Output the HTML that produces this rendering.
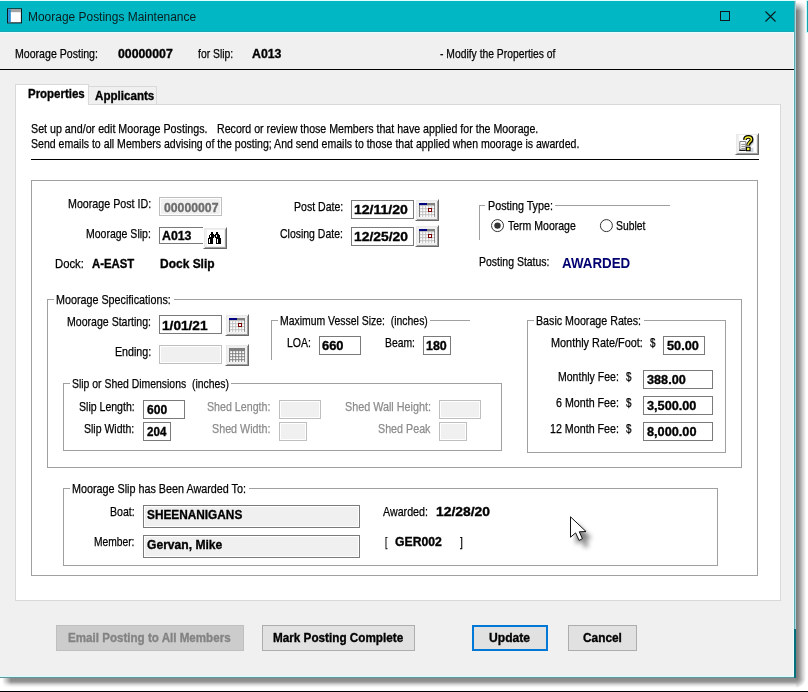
<!DOCTYPE html>
<html><head><meta charset="utf-8"><title>Moorage Postings Maintenance</title>
<style>
html,body{margin:0;padding:0;}
body{width:808px;height:692px;overflow:hidden;background:#fff;position:relative;font-family:"Liberation Sans",sans-serif;}
div,span.t,svg{position:absolute;box-sizing:border-box;}
span.t{white-space:pre;transform-origin:0 0;}
span.b{font-weight:bold;}
span.ns{-webkit-text-stroke:0 !important;}

.win{left:0;top:0;width:796px;height:678px;background:#f0f0f0;}
.gb{border:1px solid #a0a0a0;}
.lbl{background:#fff;height:3px;}
.edit{background:#fff;border:1px solid #7a7a7a;}
.edit.dis{background:#f0f0f0;border:1px solid #bfbfbf;box-shadow:inset 0 0 0 1px #fff;}
.ro{background:#f0f0f0;border:1px solid #7a7a7a;box-shadow:inset 0 0 0 1px #fff;}
span.t{-webkit-text-stroke:0.25px currentColor;}
span.b{-webkit-text-stroke:0.35px currentColor;}
.b3{background:#f0f0f0;border:1px solid;border-color:#fff #696969 #696969 #fff;box-shadow:inset 1px 1px 0 #e9e9e9, inset -1px -1px 0 #a0a0a0;}
.btn{background:#e1e1e1;border:1px solid #adadad;}

</style></head>
<body>
<div style="left:796px;top:2px;width:10px;height:676px;background:linear-gradient(to right,#7c7c7c 0,#808080 10%,#888 20%,#939393 30%,#a3a3a3 40%,#b4b4b4 50%,#c6c6c6 60%,#d6d6d6 70%,#e2e2e2 80%,#efefef 90%,#fff 100%);-webkit-mask-image:linear-gradient(to bottom,transparent 0,#000 9px);mask-image:linear-gradient(to bottom,transparent 0,#000 9px);"></div>
<div style="left:2px;top:678px;width:794px;height:10px;background:linear-gradient(to bottom,#8a8a8a 0,#8c8c8c 20%,#969696 35%,#a8a8a8 45%,#c0c0c0 55%,#d8d8d8 65%,#ececec 78%,#fafafa 90%,#fff 100%);-webkit-mask-image:linear-gradient(to right,transparent 0,#000 9px);mask-image:linear-gradient(to right,transparent 0,#000 9px);"></div>
<div style="left:796px;top:678px;width:10px;height:10px;background:radial-gradient(circle 10px at 0 0,#808080 0,#888 15%,#969696 30%,#b0b0b0 50%,#d2d2d2 70%,#efefef 90%,#fff 100%);"></div>
<div style="left:806px;top:0px;width:2px;height:33px;background:#c4ffff;"></div>
<div style="left:807px;top:1px;width:1px;height:31px;background:#1aa0ac;"></div>
<div style="left:0px;top:691px;width:808px;height:1px;background:#000;"></div>
<div class="win"></div>
<div style="left:0px;top:0px;width:796px;height:1px;background:#e0ffff;"></div>
<div style="left:0px;top:1px;width:795px;height:30px;background:#00b7c3;"></div>
<div style="left:0px;top:31px;width:795px;height:1px;background:#14a9b5;"></div>
<div style="left:0px;top:32px;width:794px;height:1px;background:#e6ffff;"></div>
<div style="left:793px;top:33px;width:1px;height:643px;background:#eafcfd;"></div>
<div style="left:794px;top:1px;width:1px;height:676px;background:#5fa8b1;"></div>
<div style="left:795px;top:1px;width:1px;height:676px;background:#9fd9de;"></div>
<div style="left:0px;top:676px;width:796px;height:1px;background:#d4ffff;"></div>
<div style="left:0px;top:677px;width:796px;height:1px;background:#5e979c;"></div>
<div style="left:794px;top:629px;width:2px;height:49px;background:#05707c;"></div>
<svg style="left:7px;top:8px" width="17" height="17" viewBox="0 0 17 17"><rect x="0" y="0.3" width="15" height="15.1" fill="#0d1b1e"/><rect x="1.1" y="1.4" width="12.8" height="12.9" fill="#fff"/><rect x="1.1" y="1.4" width="12.8" height="2.8" fill="#a3a3a3"/><rect x="1.1" y="1.4" width="2.7" height="12.9" fill="#1e90d8"/></svg>
<svg style="left:715px;top:8px" width="70" height="18" viewBox="0 0 70 18"><rect x="5.5" y="3.5" width="9" height="9" fill="none" stroke="#0a1a1c" stroke-width="1"/><path d="M50.5 3.5 L60.5 13.5 M60.5 3.5 L50.5 13.5" stroke="#0a1a1c" stroke-width="1.1" fill="none"/></svg>
<div style="left:0px;top:69px;width:794px;height:1px;background:#000;"></div>
<div style="left:15px;top:104px;width:766px;height:497px;background:#fff;border:1px solid #d9d9d9;"></div>
<div style="left:88px;top:86px;width:69px;height:19px;background:#f0f0f0;border:1px solid #d9d9d9;border-bottom-color:#d9d9d9;"></div>
<div style="left:15px;top:84px;width:74px;height:21px;background:#fff;border:1px solid #d9d9d9;border-bottom:0;"></div>
<div style="left:31px;top:159px;width:728px;height:1px;background:#000;"></div>
<div class="b3" style="left:735px;top:133px;width:24px;height:22px;"></div>
<div style="left:739px;top:135px;width:17px;height:17px;background:#fff;"></div>
<svg style="left:738px;top:135px" width="19" height="18" viewBox="0 0 19 18">
<path d="M14.6 5 q1.4 1.8 -0.6 4 l-1.6 1.8 M12.4 13.6 h2.2 v2.6 h-2.2z" fill="none" stroke="#b9c2cc" stroke-width="1.8" opacity=".7"/>
<path d="M1.8 6.5 h6 v8.8 h-6z" fill="#fff" stroke="#808080"/>
<path d="M1.2 15.3 h6.4" stroke="#000" stroke-width="1.1"/>
<path d="M3.3 9.4h4M3.3 11.4h4M3.3 13.4h4" stroke="#808080" stroke-width="0.9"/>
<path d="M6.9 4.9 q0.1 -3 3.5 -3 q3.2 0 3.2 2.5 q0 1.3 -1.5 2.6 q-1.9 1.7 -2 3.6" fill="none" stroke="#000" stroke-width="3.8"/>
<path d="M7 4.7 q0.2 -2.7 3.4 -2.7 q3 0 3 2.4 q0 1.2 -1.4 2.4 q-2 1.8 -2.1 3.3" fill="none" stroke="#f6ee2e" stroke-width="1.4"/>
<rect x="8.5" y="12.2" width="3.5" height="3.5" fill="#fbf43a" stroke="#000" stroke-width="1.1"/>
</svg>
<div style="left:31px;top:180px;width:727px;height:396px;border:1px solid #a0a0a0;"></div>
<div class="edit dis" style="left:159px;top:197px;width:63px;height:19px;"></div>
<div class="edit" style="left:159px;top:227px;width:45px;height:17px;"></div>
<div class="b3" style="left:203px;top:227px;width:24px;height:22px;"></div>
<div style="left:207px;top:230px;width:17px;height:16px;background:#fff;"></div>
<svg style="left:208px;top:232px" width="13" height="12" viewBox="0 0 13 12" shape-rendering="crispEdges"><rect x="0" y="0" width="13" height="12" fill="none"/><rect x="3" y="0" width="2" height="1" fill="#000"/><rect x="8" y="0" width="2" height="1" fill="#000"/><rect x="3" y="1" width="2" height="1" fill="#000"/><rect x="8" y="1" width="2" height="1" fill="#000"/><rect x="2" y="2" width="4" height="1" fill="#000"/><rect x="7" y="2" width="4" height="1" fill="#000"/><rect x="1" y="3" width="1" height="1" fill="#000"/><rect x="3" y="3" width="5" height="1" fill="#000"/><rect x="9" y="3" width="3" height="1" fill="#000"/><rect x="1" y="4" width="1" height="1" fill="#000"/><rect x="3" y="4" width="3" height="1" fill="#000"/><rect x="6" y="4" width="1" height="1" fill="#808080"/><rect x="7" y="4" width="1" height="1" fill="#000"/><rect x="9" y="4" width="3" height="1" fill="#000"/><rect x="1" y="5" width="5" height="1" fill="#000"/><rect x="7" y="5" width="5" height="1" fill="#000"/><rect x="0" y="6" width="5" height="1" fill="#000"/><rect x="8" y="6" width="5" height="1" fill="#000"/><rect x="0" y="7" width="1" height="1" fill="#000"/><rect x="2" y="7" width="3" height="1" fill="#000"/><rect x="8" y="7" width="1" height="1" fill="#000"/><rect x="10" y="7" width="3" height="1" fill="#000"/><rect x="0" y="8" width="1" height="1" fill="#000"/><rect x="2" y="8" width="3" height="1" fill="#000"/><rect x="8" y="8" width="1" height="1" fill="#000"/><rect x="10" y="8" width="3" height="1" fill="#000"/><rect x="0" y="9" width="1" height="1" fill="#000"/><rect x="2" y="9" width="3" height="1" fill="#000"/><rect x="8" y="9" width="1" height="1" fill="#000"/><rect x="10" y="9" width="3" height="1" fill="#000"/><rect x="0" y="10" width="1" height="1" fill="#000"/><rect x="2" y="10" width="3" height="1" fill="#000"/><rect x="8" y="10" width="1" height="1" fill="#000"/><rect x="10" y="10" width="3" height="1" fill="#000"/><rect x="0" y="11" width="5" height="1" fill="#000"/><rect x="8" y="11" width="5" height="1" fill="#000"/></svg>
<div class="edit" style="left:351px;top:200px;width:63px;height:19px;"></div>
<div class="b3" style="left:415px;top:199px;width:24px;height:22px;"></div>
<svg style="left:419px;top:203px" width="16" height="14" viewBox="0 0 16 14"><rect x="0" y="0" width="16" height="14" fill="#c0c0c0"/><rect x="0" y="2" width="1" height="12" fill="#808080"/><rect x="15" y="2" width="1" height="12" fill="#808080"/><rect x="1.2" y="3.2" width="2" height="2" fill="#fff"/><rect x="1.2" y="6.2" width="2" height="2" fill="#fff"/><rect x="1.2" y="9.2" width="2" height="2" fill="#fff"/><rect x="1.2" y="12.2" width="2" height="2" fill="#fff"/><rect x="4.2" y="3.2" width="2" height="2" fill="#fff"/><rect x="4.2" y="6.2" width="2" height="2" fill="#fff"/><rect x="4.2" y="9.2" width="2" height="2" fill="#fff"/><rect x="4.2" y="12.2" width="2" height="2" fill="#fff"/><rect x="7.2" y="3.2" width="2" height="2" fill="#fff"/><rect x="7.2" y="6.2" width="2" height="2" fill="#fff"/><rect x="7.2" y="9.2" width="2" height="2" fill="#fff"/><rect x="7.2" y="12.2" width="2" height="2" fill="#fff"/><rect x="10.2" y="3.2" width="2" height="2" fill="#fff"/><rect x="10.2" y="6.2" width="2" height="2" fill="#fff"/><rect x="10.2" y="9.2" width="2" height="2" fill="#fff"/><rect x="10.2" y="12.2" width="2" height="2" fill="#fff"/><rect x="13.2" y="3.2" width="2" height="2" fill="#fff"/><rect x="13.2" y="6.2" width="2" height="2" fill="#fff"/><rect x="13.2" y="9.2" width="2" height="2" fill="#fff"/><rect x="13.2" y="12.2" width="2" height="2" fill="#fff"/><rect x="0" y="0" width="16" height="2" fill="#808080"/><rect x="0" y="0" width="8" height="2" fill="#000080"/><rect x="9.5" y="5.5" width="3" height="3" fill="#fff" stroke="#7a0000" stroke-width="1"/></svg>
<div class="edit" style="left:351px;top:227px;width:63px;height:19px;"></div>
<div class="b3" style="left:415px;top:225px;width:24px;height:22px;"></div>
<svg style="left:419px;top:229px" width="16" height="14" viewBox="0 0 16 14"><rect x="0" y="0" width="16" height="14" fill="#c0c0c0"/><rect x="0" y="2" width="1" height="12" fill="#808080"/><rect x="15" y="2" width="1" height="12" fill="#808080"/><rect x="1.2" y="3.2" width="2" height="2" fill="#fff"/><rect x="1.2" y="6.2" width="2" height="2" fill="#fff"/><rect x="1.2" y="9.2" width="2" height="2" fill="#fff"/><rect x="1.2" y="12.2" width="2" height="2" fill="#fff"/><rect x="4.2" y="3.2" width="2" height="2" fill="#fff"/><rect x="4.2" y="6.2" width="2" height="2" fill="#fff"/><rect x="4.2" y="9.2" width="2" height="2" fill="#fff"/><rect x="4.2" y="12.2" width="2" height="2" fill="#fff"/><rect x="7.2" y="3.2" width="2" height="2" fill="#fff"/><rect x="7.2" y="6.2" width="2" height="2" fill="#fff"/><rect x="7.2" y="9.2" width="2" height="2" fill="#fff"/><rect x="7.2" y="12.2" width="2" height="2" fill="#fff"/><rect x="10.2" y="3.2" width="2" height="2" fill="#fff"/><rect x="10.2" y="6.2" width="2" height="2" fill="#fff"/><rect x="10.2" y="9.2" width="2" height="2" fill="#fff"/><rect x="10.2" y="12.2" width="2" height="2" fill="#fff"/><rect x="13.2" y="3.2" width="2" height="2" fill="#fff"/><rect x="13.2" y="6.2" width="2" height="2" fill="#fff"/><rect x="13.2" y="9.2" width="2" height="2" fill="#fff"/><rect x="13.2" y="12.2" width="2" height="2" fill="#fff"/><rect x="0" y="0" width="16" height="2" fill="#808080"/><rect x="0" y="0" width="8" height="2" fill="#000080"/><rect x="9.5" y="5.5" width="3" height="3" fill="#fff" stroke="#7a0000" stroke-width="1"/></svg>
<div style="left:479px;top:205px;width:191px;height:35px;border-top:1px solid #a0a0a0;border-left:1px solid #a0a0a0;"></div>
<div style="left:485px;top:205px;width:70px;height:1px;background:#fff;"></div>
<svg style="left:490px;top:218px" width="15" height="15" viewBox="0 0 15 15"><circle cx="7.5" cy="7.6" r="6" fill="#fff" stroke="#333" stroke-width="1"/><circle cx="7.5" cy="7.6" r="3.2" fill="#333"/></svg>
<svg style="left:599px;top:218px" width="15" height="15" viewBox="0 0 15 15"><circle cx="7.4" cy="7.6" r="6" fill="#fff" stroke="#333" stroke-width="1"/></svg>
<div style="left:47px;top:299px;width:695px;height:169px;border-top:1px solid #a0a0a0;border-left:1px solid #a0a0a0;border-bottom:1px solid #a0a0a0;border-right:1px solid #a0a0a0;"></div>
<div style="left:54px;top:299px;width:120px;height:1px;background:#fff;"></div>
<div class="edit" style="left:159px;top:315px;width:63px;height:19px;"></div>
<div class="b3" style="left:225px;top:314px;width:24px;height:22px;"></div>
<svg style="left:229px;top:318px" width="16" height="14" viewBox="0 0 16 14"><rect x="0" y="0" width="16" height="14" fill="#c0c0c0"/><rect x="0" y="2" width="1" height="12" fill="#808080"/><rect x="15" y="2" width="1" height="12" fill="#808080"/><rect x="1.2" y="3.2" width="2" height="2" fill="#fff"/><rect x="1.2" y="6.2" width="2" height="2" fill="#fff"/><rect x="1.2" y="9.2" width="2" height="2" fill="#fff"/><rect x="1.2" y="12.2" width="2" height="2" fill="#fff"/><rect x="4.2" y="3.2" width="2" height="2" fill="#fff"/><rect x="4.2" y="6.2" width="2" height="2" fill="#fff"/><rect x="4.2" y="9.2" width="2" height="2" fill="#fff"/><rect x="4.2" y="12.2" width="2" height="2" fill="#fff"/><rect x="7.2" y="3.2" width="2" height="2" fill="#fff"/><rect x="7.2" y="6.2" width="2" height="2" fill="#fff"/><rect x="7.2" y="9.2" width="2" height="2" fill="#fff"/><rect x="7.2" y="12.2" width="2" height="2" fill="#fff"/><rect x="10.2" y="3.2" width="2" height="2" fill="#fff"/><rect x="10.2" y="6.2" width="2" height="2" fill="#fff"/><rect x="10.2" y="9.2" width="2" height="2" fill="#fff"/><rect x="10.2" y="12.2" width="2" height="2" fill="#fff"/><rect x="13.2" y="3.2" width="2" height="2" fill="#fff"/><rect x="13.2" y="6.2" width="2" height="2" fill="#fff"/><rect x="13.2" y="9.2" width="2" height="2" fill="#fff"/><rect x="13.2" y="12.2" width="2" height="2" fill="#fff"/><rect x="0" y="0" width="16" height="2" fill="#808080"/><rect x="0" y="0" width="8" height="2" fill="#000080"/><rect x="9.5" y="5.5" width="3" height="3" fill="#fff" stroke="#7a0000" stroke-width="1"/></svg>
<div class="edit dis" style="left:159px;top:345px;width:63px;height:19px;"></div>
<div class="b3" style="left:225px;top:344px;width:24px;height:22px;"></div>
<svg style="left:229px;top:348px" width="16" height="14" viewBox="0 0 16 14"><rect x="0" y="0" width="16" height="14" fill="#808080"/><rect x="0" y="2" width="1" height="12" fill="#808080"/><rect x="15" y="2" width="1" height="12" fill="#808080"/><rect x="1.2" y="3.2" width="2" height="2" fill="#fff"/><rect x="1.2" y="6.2" width="2" height="2" fill="#fff"/><rect x="1.2" y="9.2" width="2" height="2" fill="#fff"/><rect x="1.2" y="12.2" width="2" height="2" fill="#fff"/><rect x="4.2" y="3.2" width="2" height="2" fill="#fff"/><rect x="4.2" y="6.2" width="2" height="2" fill="#fff"/><rect x="4.2" y="9.2" width="2" height="2" fill="#fff"/><rect x="4.2" y="12.2" width="2" height="2" fill="#fff"/><rect x="7.2" y="3.2" width="2" height="2" fill="#fff"/><rect x="7.2" y="6.2" width="2" height="2" fill="#fff"/><rect x="7.2" y="9.2" width="2" height="2" fill="#fff"/><rect x="7.2" y="12.2" width="2" height="2" fill="#fff"/><rect x="10.2" y="3.2" width="2" height="2" fill="#fff"/><rect x="10.2" y="6.2" width="2" height="2" fill="#fff"/><rect x="10.2" y="9.2" width="2" height="2" fill="#fff"/><rect x="10.2" y="12.2" width="2" height="2" fill="#fff"/><rect x="13.2" y="3.2" width="2" height="2" fill="#fff"/><rect x="13.2" y="6.2" width="2" height="2" fill="#fff"/><rect x="13.2" y="9.2" width="2" height="2" fill="#fff"/><rect x="13.2" y="12.2" width="2" height="2" fill="#fff"/><rect x="0" y="0" width="16" height="2" fill="#808080"/><rect x="0" y="0" width="8" height="2" fill="#808080"/></svg>
<div style="left:271px;top:320px;width:199px;height:40px;border-top:1px solid #a0a0a0;border-left:1px solid #a0a0a0;"></div>
<div style="left:278px;top:320px;width:152px;height:1px;background:#fff;"></div>
<div class="edit" style="left:319px;top:336px;width:42px;height:19px;"></div>
<div class="edit" style="left:423px;top:336px;width:28px;height:19px;"></div>
<div style="left:63px;top:383px;width:439px;height:68px;border-top:1px solid #a0a0a0;border-left:1px solid #a0a0a0;border-bottom:1px solid #a0a0a0;border-right:1px solid #a0a0a0;"></div>
<div style="left:70px;top:383px;width:161px;height:1px;background:#fff;"></div>
<div class="edit" style="left:143px;top:400px;width:42px;height:19px;"></div>
<div class="edit" style="left:143px;top:422px;width:28px;height:19px;"></div>
<div class="edit dis" style="left:279px;top:400px;width:42px;height:19px;"></div>
<div class="edit dis" style="left:279px;top:422px;width:28px;height:19px;"></div>
<div class="edit dis" style="left:439px;top:400px;width:42px;height:19px;"></div>
<div class="edit dis" style="left:439px;top:422px;width:28px;height:19px;"></div>
<div style="left:527px;top:320px;width:199px;height:133px;border-top:1px solid #a0a0a0;border-left:1px solid #a0a0a0;border-bottom:1px solid #a0a0a0;border-right:1px solid #a0a0a0;"></div>
<div style="left:534px;top:320px;width:110px;height:1px;background:#fff;"></div>
<div class="edit" style="left:663px;top:336px;width:42px;height:19px;"></div>
<div class="edit" style="left:643px;top:370px;width:70px;height:19px;"></div>
<div class="edit" style="left:643px;top:396px;width:70px;height:19px;"></div>
<div class="edit" style="left:643px;top:422px;width:70px;height:19px;"></div>
<div style="left:63px;top:488px;width:655px;height:78px;border-top:1px solid #a0a0a0;border-left:1px solid #a0a0a0;border-bottom:1px solid #a0a0a0;border-right:1px solid #a0a0a0;"></div>
<div style="left:70px;top:488px;width:179px;height:1px;background:#fff;"></div>
<div class="ro" style="left:143px;top:505px;width:217px;height:23px;"></div>
<div class="ro" style="left:143px;top:535px;width:217px;height:23px;"></div>
<div style="left:56px;top:625px;width:188px;height:26px;background:#cccccc;border:1px solid #bfbfbf;"></div>
<div class="btn" style="left:262px;top:625px;width:153px;height:26px;"></div>
<div class="btn" style="left:472px;top:625px;width:76px;height:26px;border:2px solid #0078d7;"></div>
<div class="btn" style="left:568px;top:625px;width:69px;height:26px;"></div>
<span class="t ns" style="left:27.52px;top:9.64px;font-size:12px;line-height:15px;color:#0a1c1e;transform:scaleX(0.9963);">Moorage Postings Maintenance</span>
<span class="t" style="left:15.01px;top:45.8px;font-size:13px;line-height:16px;color:#000;transform:scaleX(0.8140);">Moorage Posting:</span>
<span class="t b" style="left:118.26px;top:45.8px;font-size:13px;line-height:16px;color:#000;transform:scaleX(0.9464);">00000007</span>
<span class="t" style="left:198.21px;top:45.8px;font-size:13px;line-height:16px;color:#000;transform:scaleX(0.7977);">for Slip:</span>
<span class="t b" style="left:252.01px;top:45.8px;font-size:13px;line-height:16px;color:#000;transform:scaleX(0.9468);">A013</span>
<span class="t" style="left:440.05px;top:45.8px;font-size:13px;line-height:16px;color:#000;transform:scaleX(0.7951);">- Modify the Properties of</span>
<span class="t b" style="left:27.57px;top:85.8px;font-size:13px;line-height:16px;color:#000;transform:scaleX(0.8816);">Properties</span>
<span class="t b" style="left:95.10px;top:87.8px;font-size:13px;line-height:16px;color:#000;transform:scaleX(0.8924);">Applicants</span>
<span class="t" style="left:30.99px;top:120.8px;font-size:13px;line-height:16px;color:#000;transform:scaleX(0.8221);">Set up and/or edit Moorage Postings.</span>
<span class="t" style="left:217.01px;top:120.8px;font-size:13px;line-height:16px;color:#000;transform:scaleX(0.8174);">Record or review those Members that have applied for the Moorage.</span>
<span class="t" style="left:30.99px;top:135.8px;font-size:13px;line-height:16px;color:#000;transform:scaleX(0.8107);">Send emails to all Members advising of the posting; And send emails to those that applied when moorage is awarded.</span>
<span class="t" style="left:67.76px;top:195.8px;font-size:13px;line-height:16px;color:#000;transform:scaleX(0.8227);">Moorage Post ID:</span>
<span class="t b" style="left:163.90px;top:199.8px;font-size:13px;line-height:16px;color:#6d6d6d;transform:scaleX(0.9418);">00000007</span>
<span class="t" style="left:86.19px;top:225.8px;font-size:13px;line-height:16px;color:#000;transform:scaleX(0.8079);">Moorage Slip:</span>
<span class="t b" style="left:162.01px;top:227.8px;font-size:13px;line-height:16px;color:#000;transform:scaleX(0.9468);">A013</span>
<span class="t" style="left:54.63px;top:255.8px;font-size:13px;line-height:16px;color:#000;transform:scaleX(0.8698);">Dock:</span>
<span class="t b" style="left:92.13px;top:255.8px;font-size:13px;line-height:16px;color:#000;transform:scaleX(0.8741);">A-EAST</span>
<span class="t b" style="left:159.65px;top:255.8px;font-size:13px;line-height:16px;color:#000;transform:scaleX(0.9217);">Dock Slip</span>
<span class="t" style="left:293.78px;top:198.8px;font-size:13px;line-height:16px;color:#000;transform:scaleX(0.8120);">Post Date:</span>
<span class="t b" style="left:354.22px;top:201.8px;font-size:13px;line-height:16px;color:#000;transform:scaleX(1.0787);">12/11/20</span>
<span class="t" style="left:280.20px;top:225.8px;font-size:13px;line-height:16px;color:#000;transform:scaleX(0.8059);">Closing Date:</span>
<span class="t b" style="left:354.02px;top:228.8px;font-size:13px;line-height:16px;color:#000;transform:scaleX(1.0650);">12/25/20</span>
<span class="t" style="left:488.29px;top:197.8px;font-size:13px;line-height:16px;color:#000;transform:scaleX(0.8269);">Posting Type:</span>
<span class="t" style="left:508.27px;top:217.8px;font-size:13px;line-height:16px;color:#000;transform:scaleX(0.8090);">Term Moorage</span>
<span class="t" style="left:616.40px;top:217.8px;font-size:13px;line-height:16px;color:#000;transform:scaleX(0.7947);">Sublet</span>
<span class="t" style="left:478.86px;top:253.8px;font-size:13px;line-height:16px;color:#000;transform:scaleX(0.8065);">Posting Status:</span>
<span class="t b ns" style="left:562.20px;top:254.28px;font-size:14.5px;line-height:18px;color:#000070;transform:scaleX(0.9207);">AWARDED</span>
<span class="t" style="left:55.67px;top:291.8px;font-size:13px;line-height:16px;color:#000;transform:scaleX(0.8270);">Moorage Specifications:</span>
<span class="t" style="left:66.67px;top:313.8px;font-size:13px;line-height:16px;color:#000;transform:scaleX(0.8127);">Moorage Starting:</span>
<span class="t b" style="left:162.49px;top:317.8px;font-size:13px;line-height:16px;color:#000;transform:scaleX(1.0497);">1/01/21</span>
<span class="t" style="left:114.76px;top:343.8px;font-size:13px;line-height:16px;color:#000;transform:scaleX(0.8215);">Ending:</span>
<span class="t" style="left:279.63px;top:312.8px;font-size:13px;line-height:16px;color:#000;transform:scaleX(0.8025);">Maximum Vessel Size:  (inches)</span>
<span class="t" style="left:286.77px;top:334.8px;font-size:13px;line-height:16px;color:#000;transform:scaleX(0.8096);">LOA:</span>
<span class="t b" style="left:322.03px;top:337.8px;font-size:13px;line-height:16px;color:#000;transform:scaleX(0.9928);">660</span>
<span class="t" style="left:384.80px;top:334.8px;font-size:13px;line-height:16px;color:#000;transform:scaleX(0.7966);">Beam:</span>
<span class="t b" style="left:426.18px;top:337.8px;font-size:13px;line-height:16px;color:#000;transform:scaleX(0.9577);">180</span>
<span class="t" style="left:71.82px;top:375.8px;font-size:13px;line-height:16px;color:#000;transform:scaleX(0.8020);">Slip or Shed Dimensions  (inches)</span>
<span class="t" style="left:78.65px;top:398.8px;font-size:13px;line-height:16px;color:#000;transform:scaleX(0.8114);">Slip Length:</span>
<span class="t b" style="left:146.85px;top:401.8px;font-size:13px;line-height:16px;color:#000;transform:scaleX(0.9306);">600</span>
<span class="t" style="left:84.21px;top:420.8px;font-size:13px;line-height:16px;color:#000;transform:scaleX(0.8068);">Slip Width:</span>
<span class="t b" style="left:146.80px;top:423.8px;font-size:13px;line-height:16px;color:#000;transform:scaleX(0.8949);">204</span>
<span class="t" style="left:206.99px;top:398.8px;font-size:13px;line-height:16px;color:#8c8c8c;transform:scaleX(0.8204);">Shed Length:</span>
<span class="t" style="left:211.99px;top:420.8px;font-size:13px;line-height:16px;color:#8c8c8c;transform:scaleX(0.8255);">Shed Width:</span>
<span class="t" style="left:344.63px;top:398.8px;font-size:13px;line-height:16px;color:#8c8c8c;transform:scaleX(0.8298);">Shed Wall Height:</span>
<span class="t" style="left:377.75px;top:420.8px;font-size:13px;line-height:16px;color:#8c8c8c;transform:scaleX(0.8246);">Shed Peak</span>
<span class="t" style="left:535.51px;top:312.8px;font-size:13px;line-height:16px;color:#000;transform:scaleX(0.8215);">Basic Moorage Rates:</span>
<span class="t" style="left:550.51px;top:334.8px;font-size:13px;line-height:16px;color:#000;transform:scaleX(0.8361);">Monthly Rate/Foot:</span>
<span class="t" style="left:650.21px;top:334.8px;font-size:13px;line-height:16px;color:#000;transform:scaleX(0.7561);">$</span>
<span class="t b" style="left:667.34px;top:337.8px;font-size:13px;line-height:16px;color:#000;transform:scaleX(0.9787);">50.00</span>
<span class="t" style="left:557.70px;top:368.8px;font-size:13px;line-height:16px;color:#000;transform:scaleX(0.8095);">Monthly Fee:</span>
<span class="t" style="left:626.22px;top:368.8px;font-size:13px;line-height:16px;color:#000;transform:scaleX(0.7562);">$</span>
<span class="t b" style="left:647.28px;top:371.8px;font-size:13px;line-height:16px;color:#000;transform:scaleX(0.9750);">388.00</span>
<span class="t" style="left:556.01px;top:394.8px;font-size:13px;line-height:16px;color:#000;transform:scaleX(0.8210);">6 Month Fee:</span>
<span class="t" style="left:626.22px;top:394.8px;font-size:13px;line-height:16px;color:#000;transform:scaleX(0.7562);">$</span>
<span class="t b" style="left:647.40px;top:397.8px;font-size:13px;line-height:16px;color:#000;transform:scaleX(0.9767);">3,500.00</span>
<span class="t" style="left:549.51px;top:420.8px;font-size:13px;line-height:16px;color:#000;transform:scaleX(0.8228);">12 Month Fee:</span>
<span class="t" style="left:626.22px;top:420.8px;font-size:13px;line-height:16px;color:#000;transform:scaleX(0.7562);">$</span>
<span class="t b" style="left:647.20px;top:423.8px;font-size:13px;line-height:16px;color:#000;transform:scaleX(0.9771);">8,000.00</span>
<span class="t" style="left:71.54px;top:480.8px;font-size:13px;line-height:16px;color:#000;transform:scaleX(0.8287);">Moorage Slip has Been Awarded To:</span>
<span class="t" style="left:109.51px;top:503.8px;font-size:13px;line-height:16px;color:#000;transform:scaleX(0.8130);">Boat:</span>
<span class="t b" style="left:146.80px;top:506.8px;font-size:13px;line-height:16px;color:#000;transform:scaleX(0.9099);">SHEENANIGANS</span>
<span class="t" style="left:94.46px;top:533.8px;font-size:13px;line-height:16px;color:#000;transform:scaleX(0.7890);">Member:</span>
<span class="t b" style="left:146.54px;top:536.8px;font-size:13px;line-height:16px;color:#000;transform:scaleX(0.9304);">Gervan, Mike</span>
<span class="t" style="left:383.04px;top:503.8px;font-size:13px;line-height:16px;color:#000;transform:scaleX(0.8212);">Awarded:</span>
<span class="t b" style="left:436.00px;top:503.8px;font-size:13px;line-height:16px;color:#000;transform:scaleX(1.0675);">12/28/20</span>
<span class="t" style="left:385.40px;top:533.8px;font-size:13px;line-height:16px;color:#000;transform:scaleX(0.6500);">[</span>
<span class="t b" style="left:395.30px;top:533.8px;font-size:13px;line-height:16px;color:#000;transform:scaleX(0.9389);">GER002</span>
<span class="t" style="left:460.32px;top:533.8px;font-size:13px;line-height:16px;color:#000;transform:scaleX(0.7824);">]</span>
<span class="t b" style="left:68.02px;top:629.8px;font-size:13px;line-height:16px;color:#838383;transform:scaleX(0.8921);">Email Posting to All Members</span>
<span class="t b" style="left:272.89px;top:629.8px;font-size:13px;line-height:16px;color:#000;transform:scaleX(0.9011);">Mark Posting Complete</span>
<span class="t b" style="left:489.40px;top:629.8px;font-size:13px;line-height:16px;color:#000;transform:scaleX(0.9309);">Update</span>
<span class="t b" style="left:582.50px;top:629.8px;font-size:13px;line-height:16px;color:#000;transform:scaleX(0.9117);">Cancel</span>
<svg style="left:566px;top:512px;overflow:visible" width="30" height="36" viewBox="-4 -4 30 36">
<defs><filter id="cs" x="-50%" y="-50%" width="250%" height="250%"><feGaussianBlur stdDeviation="2.6"/></filter></defs>
<path d="M0 0 L0 21.5 L5.5 17.2 L8.8 24.7 L12.7 22.8 L9.8 16.3 L15.9 15.6 Z" fill="#000" opacity=".5" filter="url(#cs)" transform="translate(6,7)"/>
<path d="M0.5 0.8 L0.5 21.2 L5.6 16.9 L9.1 24.4 L12.4 22.7 L9.3 15.8 L16 15.5 Z" fill="#fff" stroke="#111" stroke-width="1" stroke-linejoin="miter"/>
</svg>
</body></html>
